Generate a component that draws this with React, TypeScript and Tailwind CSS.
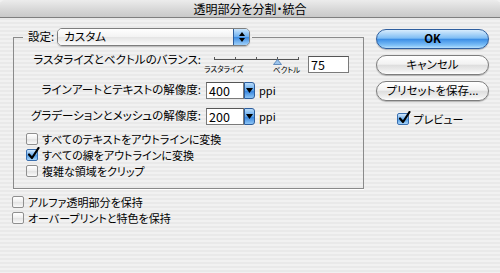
import React from 'react'

const font = "font-['Noto_Sans_CJK_JP','Noto_Sans',sans-serif] [font-feature-settings:'palt']"

function CheckBox({ checked, label, className = '' }: { checked?: boolean; label: string; className?: string }) {
  return (
    <div className={`flex items-center gap-[4px] h-[16px] ${className}`}>
      <span
        className={`relative w-[12px] h-[12px] rounded-[2px] border ${
          checked
            ? 'border-[#3a6fb0] bg-[linear-gradient(to_bottom,#cfe6fb,#6fb0ee_50%,#4e9be6_51%,#a8d4f8)]'
            : 'border-[#8f8f8f] bg-[linear-gradient(to_bottom,#ffffff,#eeeeee_50%,#e2e2e2_51%,#fafafa)]'
        }`}
      >
        {checked && (
          <svg className="absolute -top-[3px] left-[0px]" width="13" height="14" viewBox="0 0 13 14">
            <path d="M2 7.5 L5 11 L11.5 1" fill="none" stroke="#000" strokeWidth="2.2" strokeLinecap="round" strokeLinejoin="round" />
          </svg>
        )}
      </span>
      <span className="text-[11px] leading-none text-black">{label}</span>
    </div>
  )
}

function Combo({ value }: { value: string }) {
  return (
    <div className="flex items-center">
      <div className="w-[38px] h-[17px] bg-white border border-[#7a7a7a] border-t-[#555] pl-[2px] text-[12.5px] leading-[15px] text-black">
        {value}
      </div>
      <div className="w-[11px] h-[17px] rounded-r-[3px] border border-[#2d5d9c] bg-[linear-gradient(to_bottom,#b8dcfb,#5aa2ea_50%,#2f7fdc_51%,#8ec6f6)] flex items-center justify-center">
        <svg width="7" height="5" viewBox="0 0 7 5">
          <path d="M0 0 L7 0 L3.5 5 Z" fill="#000" />
        </svg>
      </div>
    </div>
  )
}

function AquaButton({ label, primary }: { label: string; primary?: boolean }) {
  return (
    <div
      className={`w-[113px] h-[20px] rounded-full border flex items-center justify-center text-[11.5px] leading-none text-black shadow-[0_1px_1px_rgba(0,0,0,0.25)] ${
        primary
          ? 'border-[#2f5f9f] font-bold bg-[linear-gradient(to_bottom,#d7ecfd,#7fbdf4_45%,#3d8fe6_52%,#7ec0f7_85%,#b7e0fd)]'
          : 'border-[#7d7d7d] bg-[linear-gradient(to_bottom,#ffffff,#f2f2f2_45%,#dedede_52%,#f0f0f0_85%,#ffffff)]'
      }`}
    >
      {label}
    </div>
  )
}

function Slider() {
  return (
    <div className="flex flex-col w-[110px] h-[22px]">
      <svg width="110" height="12" viewBox="0 0 110 12">
        <line x1="5" y1="6.5" x2="89" y2="6.5" stroke="#555" strokeWidth="1" />
        {[5, 26, 47, 68, 89].map(x => (
          <line key={x} x1={x + 0.5} y1="4" x2={x + 0.5} y2="7" stroke="#555" strokeWidth="1" />
        ))}
        <path d="M68.5 6.5 L72.5 11.5 L64.5 11.5 Z" fill="#9cc4ec" stroke="#4a78b0" strokeWidth="0.8" />
      </svg>
      <div className="relative h-[10px] text-[7.5px] leading-none text-black">
        <span className="absolute left-[-5px] top-[0px]">ラスタライズ</span>
        <span className="absolute left-[64px] top-[1px]">ベクトル</span>
      </div>
    </div>
  )
}

export default function App() {
  return (
    <div className={`w-[500px] h-[273px] overflow-hidden flex flex-col ${font} bg-[repeating-linear-gradient(to_bottom,#f1f1f1_0px,#f1f1f1_2px,#e9e9e9_2px,#e9e9e9_4px)]`}>
      <div className="h-[18px] shrink-0 rounded-t-[5px] border-b border-[#7f7f7f] bg-[linear-gradient(to_bottom,#ececec,#d6d6d6_60%,#c9c9c9)] flex items-center justify-center text-[12px] leading-none text-black">
        透明部分を分割・統合
      </div>

      <div className="flex">
        <div className="pl-[13px] pt-[10px] w-[376px]">
          <fieldset className="w-[351px] h-[161px] border border-[#8a8a8a] shadow-[0_1px_0_#ffffff]">
            <legend className="ml-[9px] pl-[5px] pr-[2px] flex items-center gap-[3px]">
              <span className="text-[11.5px] leading-none text-black">設定:</span>
              <div className="w-[193px] h-[18px] rounded-[5px] border border-[#7e7e7e] flex overflow-hidden shadow-[0_1px_1px_rgba(0,0,0,0.2)]">
                <div className="flex-1 pl-[6px] flex items-center text-[11.5px] leading-none text-black bg-[linear-gradient(to_bottom,#ffffff,#f3f3f3_50%,#e4e4e4_51%,#fbfbfb)]">
                  カスタム
                </div>
                <div className="w-[16px] border-l border-[#2d5d9c] bg-[linear-gradient(to_bottom,#c9e5fd,#6aaef0_50%,#3a8ae2_51%,#9fd0f9)] flex flex-col items-center justify-center gap-[2px]">
                  <svg width="6" height="4" viewBox="0 0 6 4"><path d="M3 0 L6 4 L0 4 Z" fill="#000" /></svg>
                  <svg width="6" height="4" viewBox="0 0 6 4"><path d="M0 0 L6 0 L3 4 Z" fill="#000" /></svg>
                </div>
              </div>
            </legend>

            <div className="grid grid-cols-[187px_1fr] pt-[7px]">
              <div className="h-[22px] text-right text-[11.5px] leading-none text-black pt-[1px]">ラスタライズとベクトルのバランス:</div>
              <div className="h-[22px] flex items-start pl-[8px]">
                <Slider />
                <div className="ml-[-11px] mt-[3px] w-[41px] h-[17px] bg-white border border-[#7a7a7a] border-t-[#555] pl-[2px] text-[12.5px] leading-[15px] text-black">75</div>
              </div>

              <div className="h-[26px] flex items-center justify-end text-[11.5px] leading-none text-black mt-[2px]">ラインアートとテキストの解像度:</div>
              <div className="h-[26px] flex items-center gap-[4px] pl-[5px] mt-[2px] text-[11px] text-black">
                <Combo value="400" />
                <span>ppi</span>
              </div>

              <div className="h-[26px] flex items-center justify-end text-[11.5px] leading-none text-black">グラデーションとメッシュの解像度:</div>
              <div className="h-[26px] flex items-center gap-[4px] pl-[5px] text-[11px] text-black">
                <Combo value="200" />
                <span>ppi</span>
              </div>
            </div>

            <div className="flex flex-col pl-[12px] mt-[2px]">
              <CheckBox label="すべてのテキストをアウトラインに変換" />
              <CheckBox checked label="すべての線をアウトラインに変換" />
              <CheckBox label="複雑な領域をクリップ" />
            </div>
          </fieldset>

          <div className="flex flex-col mt-[5px] -ml-[1px]">
            <CheckBox label="アルファ透明部分を保持" />
            <CheckBox label="オーバープリントと特色を保持" />
          </div>
        </div>

        <div className="pt-[11px] flex flex-col gap-[6px]">
          <AquaButton primary label="OK" />
          <AquaButton label="キャンセル" />
          <AquaButton label="プリセットを保存..." />
          <div className="flex justify-center mt-[4px] pr-[4px]">
            <CheckBox checked label="プレビュー" />
          </div>
        </div>
      </div>
    </div>
  )
}
